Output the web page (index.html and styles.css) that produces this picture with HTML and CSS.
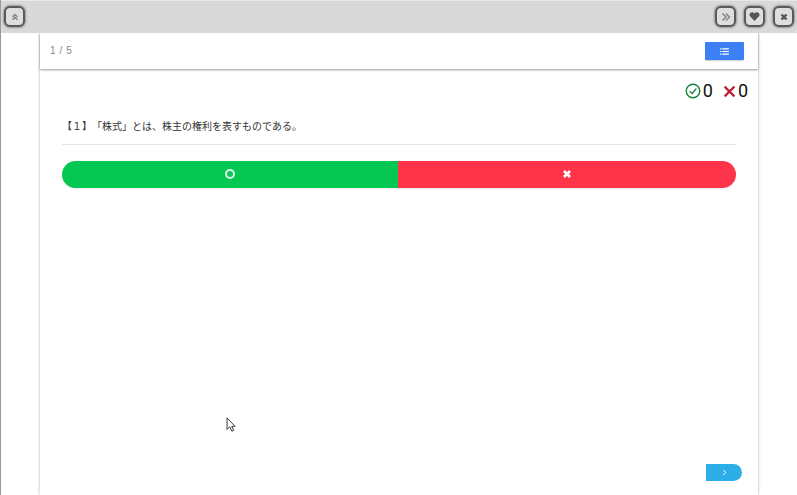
FILE: index.html
```html
<!DOCTYPE html>
<html lang="ja">
<head>
<meta charset="utf-8">
<title>クイズ</title>
<link rel="stylesheet" href="styles.css">
</head>
<body>
<div class="page">
  <header class="toolbar">
    <button class="tool">
      <svg viewBox="0 0 10 10" class="tool-icon"><path d="M2.500 5 5 2.500 7.500 5M2.500 7.800 5 5.300 7.500 7.800" class="chev"/></svg>
    </button>
    <div class="tool-group">
      <button class="tool">
        <svg viewBox="0 0 10 10" class="tool-icon"><path d="M1.500 1.500 5 5 1.500 8.500M5 1.500 8.500 5 5 8.500" class="chev"/></svg>
      </button>
      <button class="tool">
        <svg viewBox="0 0 12 12" class="tool-icon heart"><path d="M6 10.800 1.300 6C-.4 3.800 1 1.300 3.400 1.300 4.500 1.300 5.400 1.900 6 2.800 6.600 1.900 7.500 1.300 8.600 1.300 11 1.300 12.400 3.800 10.700 6Z" class="solid"/></svg>
      </button>
      <button class="tool">
        <svg viewBox="0 0 10 10" class="tool-icon"><path d="M2.500 2.500 7.500 7.500M7.500 2.500 2.500 7.500" class="cross"/></svg>
      </button>
    </div>
  </header>
  <main class="card">
    <div class="card-head">
      <span class="counter">1 / 5</span>
      <button class="list-btn">
        <svg viewBox="0 0 10 8" class="list-icon"><path d="M0 1h1.500M0 4h1.500M0 7h1.500M2.500 1H10M2.500 4H10M2.500 7H10"/></svg>
      </button>
    </div>
    <div class="score">
      <svg viewBox="0 0 16 16" class="score-ok"><circle cx="8" cy="8" r="6.800"/><path d="M4.800 8.200 7.200 10.500 11.300 5.600"/></svg>
      <span class="score-num">0</span>
      <svg viewBox="0 0 12 12" class="score-ng"><path d="M1.500 1.500 10.500 10.500M10.500 1.500 1.500 10.500"/></svg>
      <span class="score-num">0</span>
    </div>
    <p class="question">【１】「株式」とは、株主の権利を表すものである。</p>
    <div class="answers">
      <button class="answer yes"><span class="ring"></span></button>
      <button class="answer no">
        <svg viewBox="0 0 10 10" class="x-icon"><path d="M2 2 8 8M8 2 2 8"/></svg>
      </button>
    </div>
    <div class="foot">
      <button class="next">
        <svg viewBox="0 0 6 8" class="next-icon"><path d="M1.500 1 4.500 4 1.500 7"/></svg>
      </button>
    </div>
    <svg viewBox="0 0 12 18" class="cursor"><path d="M1 1V14L4 11 6.500 16 8.500 15 6.300 10.500H10Z"/></svg>
  </main>
</div>
</body>
</html>
```
FILE: styles.css
```css
* { box-sizing: border-box; }
html, body { margin: 0; height: 100%; overflow: hidden; background: #fff; }
body { font-family: "Noto Sans CJK JP", "Liberation Sans", sans-serif; color: #222; }
button { padding: 0; border: 0; font: inherit; }
.page {
  height: 495px;
  display: flex;
  flex-direction: column;
  border-left: 1px solid #999;
}
.toolbar {
  flex: none;
  position: relative;
  z-index: 2;
  height: 33px;
  padding: 5px 3px 0;
  display: flex;
  justify-content: space-between;
  align-items: flex-start;
  background: #d9d9d9;
  border-top: 1px solid #e8e8e8;
}
.tool-group { display: flex; gap: 8px; }
.tool {
  width: 21px;
  height: 21px;
  display: flex;
  align-items: center;
  justify-content: center;
  background: #dedede;
  border: 2px solid #5a5a5a;
  border-radius: 6px;
  box-shadow: 0 0 2px 1px rgba(0,0,0,.3);
}
.tool-icon { width: 10px; height: 10px; }
.tool-icon.heart { width: 11px; height: 11px; }
.chev { fill: none; stroke: #888; stroke-width: 1.500; }
.solid { fill: #555; }
.cross { fill: none; stroke: #555; stroke-width: 2.400; }
.card {
  flex: 1;
  width: 718px;
  margin-left: 39px;
  display: flex;
  flex-direction: column;
  position: relative;
  background: #fff;
  box-shadow: 0 0 3px rgba(0,0,0,.3);
}
.card-head {
  flex: none;
  height: 36px;
  padding: 9px 14px 0 10px;
  display: flex;
  justify-content: space-between;
  align-items: flex-start;
  box-shadow: 0 1px 2px rgba(0,0,0,.4);
}
.counter { font: 10px/18px "Liberation Sans", sans-serif; letter-spacing: .6px; color: #888; }
.list-btn {
  width: 39px;
  height: 18px;
  display: flex;
  align-items: center;
  justify-content: center;
  background: #3d80f5;
  border-radius: 1px;
  box-shadow: 0 1px 1px rgba(0,0,0,.2);
}
.list-icon { width: 9px; height: 7px; fill: none; stroke: #fff; stroke-width: 1.300; }
.score {
  flex: none;
  height: 20px;
  margin-top: 12px;
  padding-right: 10px;
  display: flex;
  align-items: center;
  justify-content: flex-end;
}
.score-ok { width: 16px; height: 16px; fill: none; stroke: #17823f; stroke-width: 1.400; }
.score-ng { width: 13px; height: 13px; margin-left: 10px; fill: none; stroke: #bd2038; stroke-width: 2; }
.score-num { font: 400 18px/20px Roboto, "Liberation Sans", sans-serif; color: #111; margin-left: 2px; }
.question {
  flex: none;
  margin: 17px 22px 0;
  padding: 0 0 11px;
  border-bottom: 1px solid #e4e4e4;
  font-size: 10px;
  line-height: 15px;
  text-spacing-trim: space-all;
  color: #333;
}
.answers {
  flex: none;
  margin: 16px 22px 0;
  display: flex;
  border-radius: 14px;
  overflow: hidden;
  height: 27px;
  box-shadow: 0 1px 2px rgba(0,0,0,.08);
}
.answer {
  flex: 1;
  padding-bottom: 1px;
  display: flex;
  align-items: center;
  justify-content: center;
}
.yes { flex: 0 0 336px; background: #05c853; }
.no { background: #ff3349; }
.ring { width: 10px; height: 10px; border: 2px solid #dff5e6; border-radius: 50%; }
.x-icon { width: 10px; height: 10px; fill: none; stroke: #fff; stroke-width: 2.600; }
.foot {
  margin-top: auto;
  padding: 0 16px 14px 0;
  display: flex;
  justify-content: flex-end;
}
.next {
  width: 36px;
  height: 17px;
  display: flex;
  align-items: center;
  justify-content: center;
  background: #2eaee8;
  border-radius: 0 9px 9px 0;
}
.next-icon { width: 5px; height: 7px; fill: none; stroke: #fff; stroke-width: 1.200; }
.cursor {
  position: absolute;
  left: 186px;
  top: 384px;
  width: 11px;
  height: 16px;
  fill: #fff;
  stroke: #222;
  stroke-width: 1;
}
```
